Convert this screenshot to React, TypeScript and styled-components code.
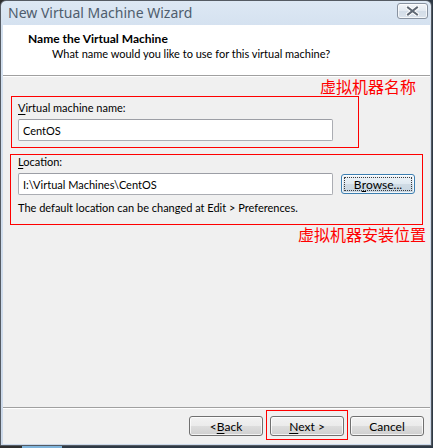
import styled, { createGlobalStyle } from "styled-components";

const GlobalStyle = createGlobalStyle`
    html, body {
        margin: 0;
        padding: 0;
        background: #2f3a46;
    }
    #root {
        width: 433px;
        height: 448px;
        overflow: hidden;
    }
`;

const uiFont = `Lato, "Noto Sans", sans-serif`;

const Desktop = styled.div`
    width: 433px;
    height: 448px;
    display: flex;
    flex-direction: column;
    background: linear-gradient(90deg, #2f2f2f 0 22px, #7fb4dc 22px 62px, #2f3a46 62px);
`;

const Window = styled.div`
    width: 430px;
    height: 444px;
    display: flex;
    flex-direction: column;
    border: 1px solid #555b63;
    border-radius: 6px 6px 0 0;
    background: linear-gradient(#dde8f4, #d3e0ef 30px, #ccd9ea);
    font-family: ${uiFont};
    font-size: 11px;
    color: #000;
`;

const TitleBar = styled.div`
    height: 24px;
    display: flex;
    align-items: center;
    justify-content: space-between;
    padding: 0 3px 0 7px;
`;

const Title = styled.span`
    font-family: "Noto Sans", sans-serif;
    font-size: 14px;
    color: #4f5d6d;
    margin-top: -2px;
`;

const CloseButton = styled.div`
    width: 29px;
    height: 14px;
    margin-top: -4px;
    border: 1px solid #8892a0;
    border-radius: 3px;
    background: linear-gradient(#f2f5f9, #e2e9f1 50%, #d3dde8 51%, #dbe3ec);
    box-shadow: inset 0 0 0 1px rgba(255, 255, 255, 0.7);
    display: flex;
    align-items: center;
    justify-content: center;
`;

const Client = styled.div`
    flex: 1;
    display: flex;
    flex-direction: column;
    margin: 0 1px 1px 2px;
    background: #f0f0f0;
`;

const Header = styled.div`
    height: 51px;
    box-sizing: border-box;
    padding: 7px 0 0 25px;
    background: #fff;
    border-bottom: 1px solid #a0a0a0;
`;

const HeaderTitle = styled.div`
    font-weight: bold;
    font-size: 12px;
    line-height: 14px;
`;

const HeaderSub = styled.div`
    line-height: 14px;
    margin: 1px 0 0 24px;
`;

const Body = styled.div`
    flex: 1;
    display: flex;
    flex-direction: column;
    border-top: 1px solid #fff;
`;

const Note = styled.div<{ $right: number }>`
    align-self: flex-end;
    margin-right: ${(p) => p.$right}px;
    font-family: "Noto Sans CJK SC", sans-serif;
    font-size: 16px;
    line-height: 19px;
    color: #ff0000;
`;

const Mark = styled.div<{ $left: number; $width: number }>`
    margin-left: ${(p) => p.$left}px;
    width: ${(p) => p.$width}px;
    box-sizing: border-box;
    border: 1px solid #ff0000;
    display: flex;
    flex-direction: column;
`;

const NameMark = styled(Mark)`
    height: 52px;
    padding: 4px 0 0 6px;
`;

const LocationMark = styled(Mark)`
    margin-top: 6px;
    height: 71px;
    padding: 0 0 0 7px;
`;

const Label = styled.div`
    line-height: 14px;
    margin-bottom: 4px;
`;

const Key = styled.span`
    text-decoration: underline;
    text-underline-offset: 2px;
`;

const TextBox = styled.div`
    width: 315px;
    height: 22px;
    box-sizing: border-box;
    border: 1px solid #abadb3;
    border-top-color: #9c9ea5;
    border-radius: 2px;
    background: #fff;
    padding: 0 4px;
    display: flex;
    align-items: center;
`;

const Row = styled.div`
    display: flex;
    align-items: center;
    gap: 8px;
`;

const Hint = styled.div`
    line-height: 14px;
    margin-top: 6px;
`;

const Button = styled.div<{ $focused?: boolean }>`
    width: 74px;
    height: 20px;
    box-sizing: border-box;
    border: 1px solid ${(p) => (p.$focused ? "#3c7fb1" : "#707070")};
    border-radius: 3px;
    background: ${(p) =>
        p.$focused
            ? "linear-gradient(#eef4f9, #dfe9f1 50%, #cfdbe5 51%, #c6d5e1)"
            : "linear-gradient(#f2f2f2, #ebebeb 50%, #dddddd 51%, #cfcfcf)"};
    box-shadow: inset 0 0 0 1px rgba(255, 255, 255, 0.75);
    display: flex;
    align-items: center;
    justify-content: center;
    font-size: 12px;
    position: relative;
`;

const FocusRing = styled.div`
    position: absolute;
    inset: 2px;
    border: 1px dotted #3b3b3b;
    border-radius: 1px;
`;

const Footer = styled.div`
    height: 34px;
    border-top: 1px solid #a0a0a0;
    box-shadow: inset 0 1px 0 #fff;
    display: flex;
    justify-content: flex-end;
    align-items: flex-start;
    padding: 2px 6px 0 0;
`;

const FooterButton = styled(Button)`
    margin-top: 6px;
`;

const NextFrame = styled.div`
    border: 1px solid #ff0000;
    padding: 5px 3px 3px 3px;
    margin: 0 2px 0 3px;
`;

function CloseGlyph() {
    return (
        <svg width="13" height="10" viewBox="0 0 13 10">
            <path
                d="M2 1.5 L11 8.5 M11 1.5 L2 8.5"
                stroke="#fff"
                strokeWidth="4"
                strokeLinecap="square"
            />
            <path
                d="M2 1.5 L11 8.5 M11 1.5 L2 8.5"
                stroke="#5f6874"
                strokeWidth="2"
                strokeLinecap="square"
            />
        </svg>
    );
}

export default function App() {
    return (
        <>
            <GlobalStyle />
            <Desktop>
                <Window>
                    <TitleBar>
                        <Title>New Virtual Machine Wizard</Title>
                        <CloseButton>
                            <CloseGlyph />
                        </CloseButton>
                    </TitleBar>
                    <Client>
                        <Header>
                            <HeaderTitle>Name the Virtual Machine</HeaderTitle>
                            <HeaderSub>What name would you like to use for this virtual machine?</HeaderSub>
                        </Header>
                        <Body>
                            <Note $right={14}>虚拟机器名称</Note>
                            <NameMark $left={8} $width={348}>
                                <Label>
                                    <Key>V</Key>irtual machine name:
                                </Label>
                                <TextBox>CentOS</TextBox>
                            </NameMark>
                            <LocationMark $left={7} $width={413}>
                                <Label>
                                    <Key>L</Key>ocation:
                                </Label>
                                <Row>
                                    <TextBox>I:\Virtual Machines\CentOS</TextBox>
                                    <Button $focused>
                                        <FocusRing />
                                        B<Key>r</Key>owse...
                                    </Button>
                                </Row>
                                <Hint>The default location can be changed at Edit &gt; Preferences.</Hint>
                            </LocationMark>
                            <Note $right={4}>虚拟机器安装位置</Note>
                        </Body>
                        <Footer>
                            <FooterButton>
                                &lt; <Key>B</Key>ack
                            </FooterButton>
                            <NextFrame>
                                <Button>
                                    <Key>N</Key>ext &gt;
                                </Button>
                            </NextFrame>
                            <FooterButton>Cancel</FooterButton>
                        </Footer>
                    </Client>
                </Window>
            </Desktop>
        </>
    );
}
